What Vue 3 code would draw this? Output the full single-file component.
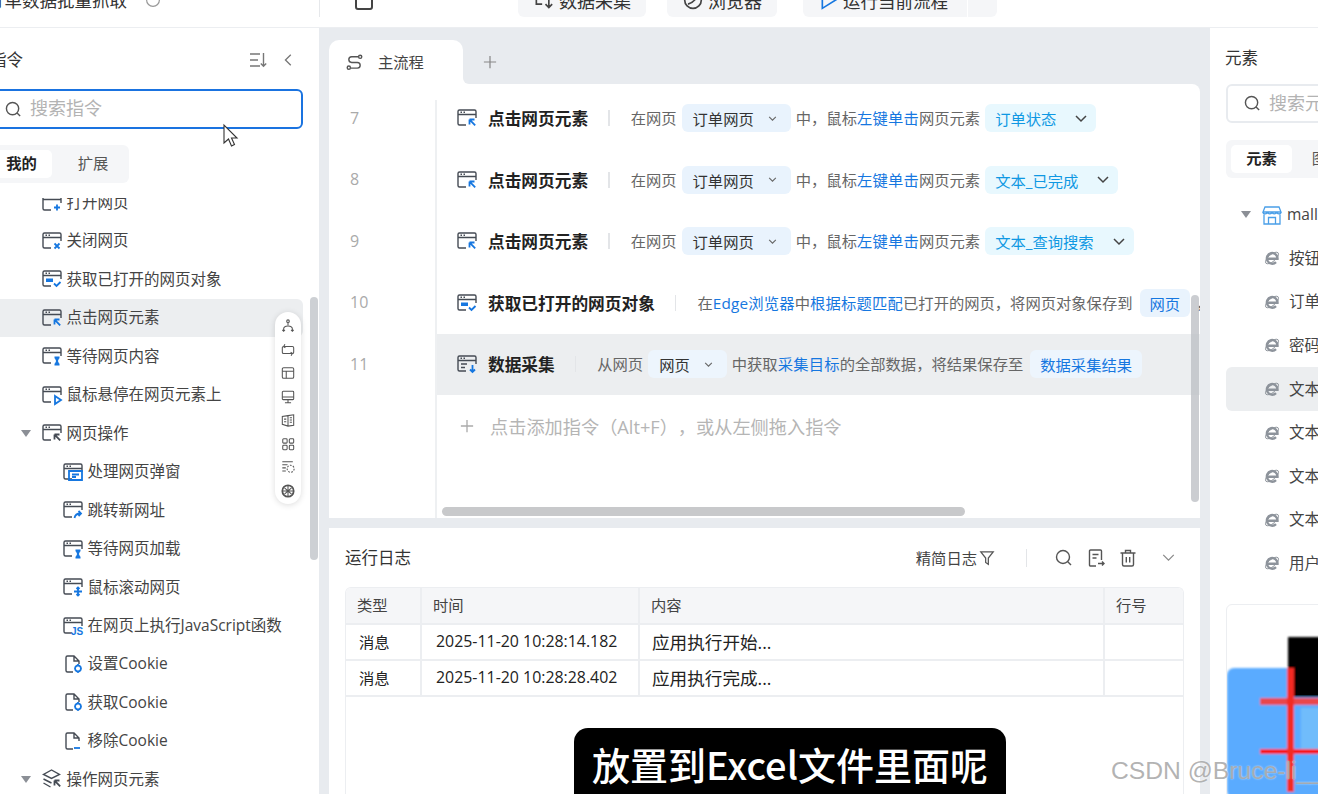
<script setup>
const acc = {
  plus: 'M15 11.500v6M12 14.500h6',
  close: 'M12.500 12.500l5 5M17.500 12.500l-5 5',
  check: 'M12 14.500l2.500 2.500 4-4',
  click: 'M12.500 11.500h5M12.500 11.500v5M12.800 11.800l5.400 5.600',
  wait: 'M12.500 11.500h5M12.500 18.500h5M13.500 11.500l3 7M16.500 11.500l-3 7',
  hover: 'M13 11l6 4-6 4z',
  jump: 'M11.500 18c.5-3 2.500-4.500 6-4.500M15.500 11l2.500 2.500-2.500 2.500',
  move: 'M15 10.500v8M11 14.500h8M13.500 12l1.500-1.500 1.500 1.500M13.500 17l1.500 1.500 1.500-1.500',
  popup: 'M6 9h13v9H6zM9 12.500h7M9 15h4',
  data: 'M15.500 11v7M13 15.500l2.500 2.500 2.500-2.500',
  minus: 'M11 17h6',
  cookie: 'M15 11.500a3 3 0 1 0 .01 0zM15 10v1.500M15 17.500V19M11.800 14.500h1.200M17 14.500h1.200'
}
const tree = [
  { t: '打开网页', a: 'plus', lv: 1 },
  { t: '关闭网页', a: 'close', lv: 1 },
  { t: '获取已打开的网页对象', a: 'check', lv: 1, bar: true },
  { t: '点击网页元素', a: 'click', lv: 1, on: true },
  { t: '等待网页内容', a: 'wait', lv: 1 },
  { t: '鼠标悬停在网页元素上', a: 'hover', lv: 1 },
  { t: '网页操作', a: 'click', lv: 1, group: true },
  { t: '处理网页弹窗', a: 'popup', lv: 2 },
  { t: '跳转新网址', a: 'jump', lv: 2 },
  { t: '等待网页加载', a: 'wait', lv: 2 },
  { t: '鼠标滚动网页', a: 'move', lv: 2 },
  { t: '在网页上执行JavaScript函数', a: 'js', lv: 2 },
  { t: '设置Cookie', a: 'cookie', lv: 2, doc: true },
  { t: '获取Cookie', a: 'cookie', lv: 2, doc: true },
  { t: '移除Cookie', a: 'minus', lv: 2, doc: true },
  { t: '操作网页元素', a: 'click', lv: 1, group: true, layers: true }
]
const click = (el) => [
  { k: 't', v: '在网页' }, { k: 'p', v: '订单网页' }, { k: 't', v: '中，鼠标' }, { k: 'b', v: '左键单击' },
  { k: 't', v: '网页元素' }, { k: 'e', v: el }
]
const rows = [
  { n: 7, a: 'click', title: '点击网页元素', segs: click('订单状态') },
  { n: 8, a: 'click', title: '点击网页元素', segs: click('文本_已完成') },
  { n: 9, a: 'click', title: '点击网页元素', segs: click('文本_查询搜索') },
  { n: 10, a: 'check', bar: true, title: '获取已打开的网页对象', segs: [
    { k: 't', v: '在' }, { k: 'b', v: 'Edge浏览器' }, { k: 't', v: '中' }, { k: 'b', v: '根据标题匹配' },
    { k: 't', v: '已打开的网页，将网页对象保存到' }, { k: 'o', v: '网页' }, { k: 't', v: '，' }
  ] },
  { n: 11, a: 'data', lines: true, on: true, title: '数据采集', segs: [
    { k: 't', v: '从网页' }, { k: 'p', v: '网页' }, { k: 't', v: '中获取' }, { k: 'b', v: '采集目标' },
    { k: 't', v: '的全部数据，将结果保存至' }, { k: 'o', v: '数据采集结果' }
  ] }
]
const elems = ['按钮_登录', '订单网页', '密码输入框', '文本_订单状态', '文本_已完成', '文本_查询搜索', '文本_订单号', '用户名输入框']
const logs = [
  { time: '2025-11-20 10:28:14.182', msg: '应用执行开始...' },
  { time: '2025-11-20 10:28:28.402', msg: '应用执行完成...' }
]
</script>

<template>
  <div class="page">
    <header class="top">
      <div class="title-wrap">
        <span class="app-title">订单数据批量抓取</span>
        <svg class="t-circle" viewBox="0 0 20 20"><circle cx="10" cy="10" r="8" /></svg>
      </div>
      <div class="top-tools">
        <svg class="t-ic save" viewBox="0 0 20 20"><path d="M2 1v14a2 2 0 0 0 2 2h12a2 2 0 0 0 2-2V1" /></svg>
        <svg class="t-ic undo" viewBox="0 0 20 20"><path d="M12 -4c4 0 6 2 6 5s-3 5-6 5H6" /></svg>
        <svg class="t-ic redo" viewBox="0 0 20 20"><path d="M8 -4c-4 0-6 2-6 5s3 5 6 5h6" /></svg>
        <div class="t-btn collect-btn">
          <svg class="t-ic2" viewBox="0 0 24 24"><path d="M14 2H4v15h7M19 8v13M15 17l4 4 4-4" /></svg>
          <span>数据采集</span>
        </div>
        <div class="t-btn browser-btn">
          <svg class="t-ic2" viewBox="0 0 24 24"><circle cx="12" cy="12" r="10" /><path d="M6 17c4-1 8-4 11-9" /></svg>
          <span>浏览器</span>
        </div>
        <div class="run-group">
          <div class="t-btn run-btn">
            <svg class="t-ic2 blue" viewBox="0 0 24 24"><path d="M4 2v20l16-10z" /></svg>
            <span>运行当前流程</span>
          </div>
          <div class="t-btn run-more"></div>
        </div>
      </div>
    </header>

    <div class="body">
      <aside class="left">
        <div class="l-head">
          <span class="p-title">指令</span>
          <div class="l-head-ic">
            <svg class="h-ic" viewBox="0 0 18 18"><path d="M1 3h10M1 9h8M1 15h10M14.500 2v13M11.800 12.500l2.700 2.700 2.700-2.700" /></svg>
            <svg class="h-ic back" viewBox="0 0 18 18"><path d="M11 3L5 9l6 6" /></svg>
          </div>
        </div>
        <div class="l-search">
          <svg class="s-ic" viewBox="0 0 18 18"><circle cx="8" cy="8" r="6.500" /><path d="M12.800 12.800L16 16" /></svg>
          <span class="ph">搜索指令</span>
        </div>
        <div class="seg l-seg">
          <span class="seg-on">我的</span>
          <span class="seg-off">扩展</span>
        </div>
        <div class="l-list">
          <div class="l-list-in">
            <div v-for="it in tree" :key="it.t" class="l-row" :class="['lv' + it.lv, { on: it.on }]">
              <span class="caret-slot"><i v-if="it.group" class="caret"></i></span>
              <svg class="ic" viewBox="0 0 20 20">
                <template v-if="it.doc">
                  <path class="base" d="M10 18H4.500A1.500 1.500 0 0 1 3 16.500v-13A1.500 1.500 0 0 1 4.500 2H11l5 5v3M11 2v5h5" />
                </template>
                <template v-else-if="it.layers">
                  <path class="base" d="M9.500 1L1.500 5.500l8 4 8-4zM1.500 10l8 4M1.500 14l7 4" />
                </template>
                <template v-else>
                  <path class="base" d="M19 10V3.500A1.500 1.500 0 0 0 17.500 2h-15A1.500 1.500 0 0 0 1 3.500v12A1.500 1.500 0 0 0 2.500 17H9M1 6.500h18M3.500 4.300h1.500M6.500 4.300h1.500" />
                </template>
                <rect v-if="it.bar" class="acc-fill" x="4" y="9.500" width="7" height="3.500" />
                <text v-if="it.a === 'js'" class="js" x="8" y="19">JS</text>
                <path v-else class="acc" :class="{ dark: it.group }" :d="acc[it.a]" />
              </svg>
              <span class="l-text">{{ it.t }}</span>
            </div>
          </div>
        </div>
        <div class="l-scroll"></div>
        <div class="float-bar">
          <svg viewBox="0 0 16 16"><path d="M8 4v3M3 14v-2.500c0-2 1.500-3.500 5-3.500s5 1.500 5 3.500V14M1.500 12.500L3 14l1.500-1.500M11.500 12.500L13 14l1.500-1.500" /><circle cx="8" cy="2.500" r="1.500" /></svg>
          <svg viewBox="0 0 16 16"><path d="M3 12a1.500 1.500 0 0 1-1.500-1.500v-5A1.500 1.500 0 0 1 3 4h10a1.500 1.500 0 0 1 1.500 1.500v5A1.500 1.500 0 0 1 13 12H3zM4.500 1.500L3 4l2 1.500M11.500 14.500L13 12l-2-1.500" /></svg>
          <svg viewBox="0 0 16 16"><rect x="1.500" y="2" width="13" height="12" rx="1.500" /><path d="M1.500 6h13M6 6v8" /></svg>
          <svg viewBox="0 0 16 16"><rect x="1.500" y="1.500" width="13" height="9.500" rx="1" /><path d="M1.500 8h13M8 11v3M4.500 14.500h7" /></svg>
          <svg viewBox="0 0 16 16"><path d="M8 3l6.500-1v12L8 15 1.500 13V4zM8 3v12M10 5.500h2.500M10 8h2.500M10 10.500h2.500M3.500 7h2.500M3.500 10h2.500" /></svg>
          <svg viewBox="0 0 16 16"><rect x="2" y="2" width="5" height="5" rx="1" /><rect x="9.500" y="2" width="5" height="5" rx="1" /><rect x="2" y="9.500" width="5" height="5" rx="1" /><rect x="9.500" y="9.500" width="5" height="5" rx="1" /></svg>
          <svg viewBox="0 0 16 16"><path d="M1.500 2h12M1.500 5.500h6M1.500 9h4M1.500 12.500h4" /><circle cx="11" cy="10" r="4" stroke-dasharray="2 1.500" /></svg>
          <svg viewBox="0 0 16 16"><circle cx="8" cy="8" r="6.500" stroke-width="2" /><path d="M4 4.500l8 7M12 4.500l-8 7M8 1.500v13M1.500 8h13" /></svg>
        </div>
      </aside>

      <main class="center">
        <div class="strip">
          <div class="tab-wrap">
            <div class="tab">
              <svg class="tab-ic" viewBox="0 0 18 18"><path d="M13 4H6a3 3 0 0 0 0 6h6a3 3 0 0 1 0 6H5" /><circle cx="15" cy="4" r="1.700" /><circle cx="3" cy="15.500" r="1.700" /></svg>
              <span>主流程</span>
            </div>
          </div>
          <div class="strip-rest">
            <svg class="tab-add" viewBox="0 0 16 16"><path d="M8 1v14M1 8h14" /></svg>
          </div>
        </div>

        <section class="canvas">
          <div class="flow">
            <div class="flow-in">
              <div v-for="r in rows" :key="r.n" class="f-row">
                <span class="f-num">{{ r.n }}</span>
                <div class="f-cmd" :class="{ on: r.on }">
                  <svg class="ic f-ic" viewBox="0 0 20 20">
                    <path class="base" d="M19 10V3.500A1.500 1.500 0 0 0 17.500 2h-15A1.500 1.500 0 0 0 1 3.500v12A1.500 1.500 0 0 0 2.500 17H9M1 6.500h18M3.500 4.300h1.500M6.500 4.300h1.500" />
                    <rect v-if="r.bar" class="acc-fill" x="4" y="9.500" width="7" height="3.500" />
                    <path v-if="r.lines" class="base" d="M4 10h6M4 13.500h4" />
                    <path class="acc" :d="acc[r.a]" />
                  </svg>
                  <strong class="f-title">{{ r.title }}</strong>
                  <i class="f-sep"></i>
                  <template v-for="(s, i) in r.segs" :key="i">
                    <span v-if="s.k === 't'" class="f-t">{{ s.v }}</span>
                    <span v-else-if="s.k === 'b'" class="f-b">{{ s.v }}</span>
                    <span v-else-if="s.k === 'p'" class="chip pg">
                      {{ s.v }}
                      <svg class="chev small" viewBox="0 0 10 6"><path d="M1 1l4 4 4-4" /></svg>
                    </span>
                    <span v-else-if="s.k === 'e'" class="chip elem">
                      {{ s.v }}
                      <svg class="chev big" viewBox="0 0 12 7"><path d="M1 1l5 5 5-5" /></svg>
                    </span>
                    <span v-else class="chip out">{{ s.v }}</span>
                  </template>
                </div>
              </div>
              <div class="f-row">
                <span class="f-num"></span>
                <div class="f-cmd add">
                  <svg class="add-plus" viewBox="0 0 16 16"><path d="M8 1v14M1 8h14" /></svg>
                  <span>点击添加指令（Alt+F），或从左侧拖入指令</span>
                </div>
              </div>
            </div>
          </div>
          <div class="sb-h"></div>
          <div class="sb-v"></div>
        </section>

        <section class="log">
          <div class="log-head">
            <span class="p-title">运行日志</span>
            <div class="log-tools">
              <span class="log-filter">精简日志</span>
              <svg class="log-ic funnel" viewBox="0 0 18 18"><path d="M2 2h14l-5.500 7v7l-3-2V9z" /></svg>
              <i class="log-sep"></i>
              <svg class="log-ic" viewBox="0 0 18 18"><circle cx="8" cy="8" r="6.500" /><path d="M12.800 12.800L16 16" /></svg>
              <svg class="log-ic" viewBox="0 0 18 18"><path d="M9 17H3.500A1 1 0 0 1 2.500 16V2a1 1 0 0 1 1-1h10a1 1 0 0 1 1 1v9M5.500 5.500h6M5.500 9h4M11 14.500h6M15 12.500l2 2-2 2" /></svg>
              <svg class="log-ic" viewBox="0 0 18 18"><path d="M1.500 4h15M6.500 4V1.500h5V4M3.500 4v11.500a1.500 1.500 0 0 0 1.500 1.500h8a1.500 1.500 0 0 0 1.500-1.500V4M7.300 8v5.500M10.700 8v5.500" /></svg>
              <svg class="log-chev" viewBox="0 0 14 8"><path d="M1 1l6 6 6-6" /></svg>
            </div>
          </div>
          <div class="tbl">
            <div class="tr th">
              <span>类型</span><span>时间</span><span>内容</span><span>行号</span>
            </div>
            <div v-for="l in logs" :key="l.time" class="tr td">
              <span class="c-type">消息</span>
              <span class="c-time">{{ l.time }}</span>
              <span class="c-msg">{{ l.msg }}</span>
              <span></span>
            </div>
          </div>
        </section>
      </main>

      <aside class="right">
        <div class="r-inner">
          <div class="p-title r-title">元素</div>
          <div class="r-search">
            <svg class="s-ic" viewBox="0 0 18 18"><circle cx="8" cy="8" r="6.500" /><path d="M12.800 12.800L16 16" /></svg>
            <span class="ph">搜索元素</span>
          </div>
          <div class="seg r-seg">
            <span class="seg-on">元素</span>
            <span class="seg-off">图像</span>
          </div>
          <div class="r-tree">
            <div class="r-row root">
              <i class="caret"></i>
              <svg class="store" viewBox="0 0 20 20"><path d="M3 2h14l2 5H1zM1 7c0 2.500 4 2.500 4.500 0 .5 2.500 4 2.500 4.500 0 .5 2.500 4 2.500 4.500 0 .5 2.500 4.500 2.500 4.500 0M2 9.500V19h16V9.500M6.500 19v-6.500h7V19" /></svg>
              <span class="r-text">mall.example.com</span>
            </div>
            <div v-for="(e, i) in elems" :key="e" class="r-row leaf" :class="{ on: i === 3 }">
              <svg class="ie" viewBox="0 0 16 16">
                <ellipse cx="8" cy="8" rx="8" ry="3.500" transform="rotate(-40 8 8)" />
                <path class="ie-e" d="M2.800 8.700h10.700a5.300 5.300 0 1 0-1.500 3.400" />
              </svg>
              <span class="r-text">{{ e }}</span>
            </div>
          </div>
          <div class="r-card">
            <svg class="thumb" viewBox="0 0 92 190" preserveAspectRatio="xMinYMin">
              <defs><filter id="soft"><feGaussianBlur stdDeviation="1" /></filter></defs>
              <g filter="url(#soft)">
                <rect x="0" y="63" width="100" height="130" rx="7" fill="#5aabff" />
                <rect x="61" y="32" width="40" height="60" fill="#000" />
                <rect x="74" y="103" width="30" height="42" fill="#6fbcfb" />
                <rect x="33" y="93" width="70" height="7" fill="#e9474c" />
                <rect x="33" y="144" width="70" height="5" fill="#f8181a" />
                <rect x="60" y="63" width="7" height="124" fill="#f32a22" />
              </g>
            </svg>
          </div>
        </div>
      </aside>
    </div>

    <svg class="cursor" viewBox="0 0 16 24"><path d="M1 1v18l4.500-4 3 7 3-1.500-3-6.500H14z" /></svg>
    <div class="subtitle">放置到Excel文件里面呢</div>
    <div class="wm">CSDN @Bruce-li__</div>
  </div>
</template>

<style>
html, body { margin: 0; background: #fff; }
</style>

<style scoped>
.page {
  position: relative;
  width: 1318px;
  height: 794px;
  overflow: hidden;
  display: flex;
  flex-direction: column;
  background: #e8ebef;
  font-family: "Open Sans", "Noto Sans CJK SC", sans-serif;
  color: #333;
  font-size: 15.3px;
  text-spacing-trim: space-all;
}
svg { display: block; flex: none; overflow: visible; }

/* top bar */
.top {
  flex: none;
  background: #fff;
  display: flex;
  align-items: flex-end;
  padding-bottom: 10px;
  box-sizing: border-box;
  overflow: hidden;
  border-bottom: 1px solid #eceef1;
  height: 28px;
}
.title-wrap { width: 319px; display: flex; align-items: center; margin-left: -13px; margin-right: 13px; height: 34px; flex: none; }
.app-title { font-size: 17.500px; color: #333; white-space: nowrap; line-height: 34px; }
.t-circle { width: 16px; height: 16px; margin-left: 18px; fill: none; stroke: #999; stroke-width: 1.500; }
.top-tools { height: 34px; display: flex; align-items: center; flex: 1; }
.top-tools::before { content: ""; width: 1px; height: 46px; background: #e6e8eb; margin-top: -12px; flex: none; }
.t-ic { width: 20px; height: 20px; fill: none; stroke: #444; stroke-width: 2; margin-top: 4px; }
.save { margin-left: 34px; }
.undo { margin-left: 47px; }
.redo { margin-left: 28px; stroke: #bbb; }
.t-btn {
  height: 34px;
  background: #f5f6f8;
  border-radius: 6px;
  display: flex;
  align-items: center;
  font-size: 18px;
  color: #333;
  box-sizing: border-box;
}
.collect-btn { margin-left: 29px; width: 128px; padding-left: 15px; gap: 6px; }
.browser-btn { margin-left: 21px; width: 110px; padding-left: 16px; gap: 5px; }
.run-group { margin-left: 26px; display: flex; gap: 1px; }
.run-btn { width: 164px; padding-left: 16px; gap: 4px; border-radius: 6px 0 0 6px; font-size: 17.500px; }
.run-more { width: 29px; border-radius: 0 6px 6px 0; }
.t-ic2 { width: 20px; height: 20px; fill: none; stroke: #444; stroke-width: 2; }
.t-ic2.blue { stroke: #1677e0; }

.body { flex: 1; display: flex; gap: 10px; min-height: 0; }
.p-title { font-size: 16.500px; color: #333; line-height: 24px; }

/* left */
.left {
  position: relative;
  width: 319px;
  flex: none;
  background: #fff;
  box-sizing: border-box;
  padding: 20px 16px 0 0;
  display: flex;
  flex-direction: column;
}
.l-head { height: 24px; display: flex; align-items: center; justify-content: space-between; margin-left: -10px; }
.l-head-ic { display: flex; align-items: center; gap: 14px; padding-right: 6px; }
.h-ic { width: 18px; height: 18px; fill: none; stroke: #777; stroke-width: 1.400; }
.h-ic.back { width: 16px; height: 16px; stroke-width: 1.500; }
.l-search {
  margin: 17px 0 0 -10px;
  height: 40px;
  box-sizing: border-box;
  border: 2px solid #1a73e0;
  border-radius: 6px;
  display: flex;
  align-items: center;
  padding-left: 13px;
  gap: 8px;
}
.s-ic { width: 17px; height: 17px; fill: none; stroke: #555; stroke-width: 1.500; }
.ph { font-size: 18px; color: #b3b3b3; white-space: nowrap; line-height: 34px; margin-top: -2px; }
.seg {
  height: 38px;
  box-sizing: border-box;
  background: #f5f6f8;
  border-radius: 6px;
  padding: 5px;
  display: flex;
  gap: 10px;
  align-items: center;
}
.l-seg { margin: 16px 0 0 -14px; width: 143px; }
.seg-on {
  width: 61px;
  height: 28px;
  background: #fff;
  border-radius: 5px;
  font-weight: 700;
  color: #222;
  text-align: center;
  line-height: 27px;
  font-size: 15.300px;
  flex: none;
}
.seg-off { width: 62px; text-align: center; color: #555; flex: none; line-height: 27px; height: 28px; }
.l-list { margin-top: 15px; flex: 1; overflow: hidden; min-height: 0; }
.l-list-in { margin-top: -14.700px; }
.l-row {
  height: 38.460px;
  display: flex;
  align-items: center;
  padding-left: 21px;
  border-radius: 0 6px 6px 0;
  color: #444;
  white-space: nowrap;
  font-size: 15.500px;
}
.l-row.lv2 { padding-left: 42px; }
.l-row.on { background: #eceef0; }
.caret-slot { width: 21px; flex: none; display: flex; }
.caret { width: 0; height: 0; border-left: 5px solid transparent; border-right: 5px solid transparent; border-top: 7px solid #8b8f96; display: block; flex: none; }
.ic { width: 20px; height: 20px; }
.l-text { margin-left: 4.500px; margin-top: -2px; }
.base { fill: none; stroke: #454b54; stroke-width: 1.400; }
.acc { fill: none; stroke: #1677e0; stroke-width: 1.800; }
.acc.dark { stroke: #454b54; }
.acc-fill { fill: #1677e0; }
.js { font: 700 10px "Liberation Sans", sans-serif; fill: #1677e0; }
.l-scroll { position: absolute; left: 310px; top: 269px; width: 8px; height: 263px; border-radius: 4px; background: #cdd0d4; }
.float-bar {
  position: absolute;
  left: 275px;
  top: 284px;
  width: 26px;
  height: 192px;
  border-radius: 13px;
  background: #fff;
  box-shadow: 0 1px 6px rgba(0, 0, 0, .14);
  box-sizing: border-box;
  padding: 7px 0;
  display: flex;
  flex-direction: column;
  align-items: center;
  gap: 9.500px;
}
.float-bar svg { width: 14px; height: 14px; fill: none; stroke: #555; stroke-width: 1.200; }

/* center */
.center { width: 871px; flex: none; display: flex; flex-direction: column; }
.strip { height: 56px; flex: none; display: flex; background: #fff; }
.tab-wrap { background: #e8ebef; padding-top: 12px; flex: none; }
.tab {
  width: 134px;
  height: 44px;
  background: #fff;
  border-radius: 10px 10px 0 0;
  display: flex;
  align-items: center;
  padding: 0 0 2px 17px;
  box-sizing: border-box;
  gap: 15px;
  font-size: 15.300px;
  color: #444;
}
.tab-ic { width: 17px; height: 17px; fill: none; stroke: #555; stroke-width: 1.500; }
.strip-rest { flex: 1; background: #e8ebef; border-bottom-left-radius: 6px; display: flex; align-items: center; padding: 11px 0 0 20px; box-sizing: border-box; }
.tab-add { width: 14px; height: 14px; fill: none; stroke: #888; stroke-width: 1.400; }
.canvas {
  position: relative;
  height: 434px;
  flex: none;
  background: #fff;
  border-top-right-radius: 8px;
  padding-top: 16px;
  box-sizing: border-box;
  overflow: hidden;
}
.flow { height: 100%; overflow: hidden; }
.flow-in { margin-top: -12.500px; height: 500px; }
.f-row { height: 61.500px; display: flex; }
.f-row:last-child { height: 200px; }
.f-num { width: 107px; flex: none; box-sizing: border-box; padding-left: 22px; color: #aaa; font-size: 16px; line-height: 61px; margin-left: -1px; }
.f-cmd {
  flex: 1;
  min-width: 0;
  border-left: 2px solid #eef0f2;
  box-sizing: border-box;
  height: 100%;
  display: flex;
  align-items: center;
  padding-left: 20px;
  white-space: nowrap;
  overflow: hidden;
}
.f-cmd.on { background: #eceef0; }
.f-cmd.add { height: 61.500px; color: #b5b5b5; font-size: 18.200px; padding-left: 23px; gap: 16px; }
.f-row:last-child .f-cmd { height: 200px; align-items: flex-start; padding-top: 18px; }
.add-plus { width: 14px; height: 14px; fill: none; stroke: #aaa; stroke-width: 1.500; margin-top: 6px; }
.f-ic { margin-right: 11px; }
.f-title { font-size: 16.700px; font-weight: 700; color: #222; }
.f-sep { width: 1.500px; height: 16px; background: #e3e5e8; margin: 0 21px 0 20px; flex: none; }
.f-t { color: #666; margin-top: -2px; }
.f-b { color: #1677e0; margin-top: -2px; letter-spacing: .2px; }
.chip {
  height: 28px;
  border-radius: 6px;
  display: inline-flex;
  align-items: center;
  box-sizing: border-box;
  margin: 0 5px;
  flex: none;
}
.chip.pg { background: #e9f3fd; color: #333; padding: 0 14px 0 11px; }
.chip.elem { background: #e8f8fe; color: #0f98e3; padding: 0 9px 0 10px; margin-left: 5px; }
.chip.out { background: #e9f3fd; color: #1677e0; padding: 0 10px; margin-left: 7px; margin-right: 6px; }
.f-cmd.on .chip.pg, .f-cmd.on .chip.out { background: #edf5fd; }
.chev { fill: none; }
.chev.small { width: 9px; height: 5px; margin-left: 14px; stroke: #666; stroke-width: 1.300; }
.chev.big { width: 12px; height: 7px; margin-left: 19px; stroke: #444; stroke-width: 1.500; }
.sb-h { position: absolute; left: 113px; top: 423px; width: 523px; height: 9px; border-radius: 5px; background: #c8c9cb; }
.sb-v { position: absolute; left: 862px; top: 211px; width: 8px; height: 207px; border-radius: 4px; background: rgba(190, 193, 197, .8); }

.log {
  flex: 1;
  margin-top: 10px;
  background: #fff;
  padding: 0 16px;
  display: flex;
  flex-direction: column;
  min-height: 0;
}
.log-head { height: 59px; flex: none; display: flex; align-items: center; justify-content: space-between; }
.log-tools { display: flex; align-items: center; }
.log-filter { color: #444; margin-top: -2px; }
.log-ic { width: 18px; height: 18px; fill: none; stroke: #555; stroke-width: 1.400; margin-left: 14px; }
.log-ic.funnel { margin-left: 2px; width: 16px; height: 16px; }
.log-sep { width: 1px; height: 18px; background: #e3e5e8; margin: 0 14px 0 31px; }
.log-chev { width: 13px; height: 7px; fill: none; stroke: #888; stroke-width: 1.400; margin: 0 9px 0 25px; }
.tbl {
  flex: 1;
  border: 1px solid #eceef1;
  border-bottom: none;
  border-radius: 6px 6px 0 0;
  overflow: hidden;
}
.tr {
  display: grid;
  grid-template-columns: 76px 218px 465px 78px;
  border-bottom: 2px solid #eceef1;
}
.tr > span { border-right: 2px solid #eceef1; box-sizing: border-box; white-space: nowrap; padding-left: 11px; }
.tr > span:last-child { border-right: none; }
.th { height: 37px; background: #f5f6f8; line-height: 35px; color: #444; box-sizing: border-box; }
.td { height: 36px; box-sizing: border-box; line-height: 34px; color: #222; }
.tr > .c-type { padding-left: 13px; }
.tr > .c-time { padding-left: 14px; font-size: 15.900px; line-height: 33px; }
.tr > .c-msg { padding-left: 12px; font-size: 17.600px; line-height: 35px; }

/* right */
.right { width: 108px; flex: none; background: #fff; overflow: hidden; }
.r-inner { width: 330px; padding-left: 16px; box-sizing: border-box; }
.r-title { padding-top: 18px; height: 44px; box-sizing: border-box; margin-left: -1px; }
.r-search {
  margin-top: 12px;
  height: 39px;
  border: 2px solid #e8ebef;
  border-radius: 6px;
  display: flex;
  align-items: center;
  padding-left: 16px;
  gap: 8px;
  box-sizing: border-box;
}
.r-seg { margin-top: 17px; gap: 5px; }
.r-seg .seg-off { width: 60px; }
.r-tree { margin-top: 15px; }
.r-row { height: 43.570px; display: flex; align-items: center; border-radius: 6px; white-space: nowrap; color: #444; font-size: 15.500px; }
.r-row.root { padding-left: 15px; }
.r-row.leaf { padding-left: 38px; }
.r-row.on { background: #eceef0; }
.store { width: 20px; height: 20px; margin-left: 11px; fill: none; stroke: #4a9fe8; stroke-width: 1.300; }
.root .r-text { margin-left: 5px; margin-top: -2px; }
.ie { width: 16px; height: 16px; fill: none; stroke: #8d939b; stroke-width: .9; }
.ie-e { stroke-width: 2.400; }
.leaf .r-text { margin-left: 9px; margin-top: -2px; }
.r-card {
  margin-top: 19px;
  height: 240px;
  border: 1px solid #eceef1;
  border-radius: 6px;
  overflow: hidden;
}
.thumb { width: 92px; height: 190px; }

.cursor { position: absolute; left: 223px; top: 124px; width: 16px; height: 24px; fill: #fff; stroke: #333; stroke-width: 1.100; }
.subtitle {
  position: absolute;
  left: 574px;
  top: 728px;
  width: 432px;
  height: 80px;
  border-radius: 14px;
  background: #000;
  color: #fff;
  font-family: "Noto Sans CJK SC", sans-serif;
  font-size: 38px;
  font-weight: 500;
  line-height: 72px;
  text-align: center;
  white-space: nowrap;
}
.wm {
  position: absolute;
  left: 1111px;
  top: 755px;
  font-family: "Liberation Sans", sans-serif;
  font-size: 24.700px;
  line-height: 32px;
  color: rgba(165, 165, 165, .85);
  text-shadow: 0 0 2px rgba(255, 255, 255, .7);
  white-space: nowrap;
}
</style>
